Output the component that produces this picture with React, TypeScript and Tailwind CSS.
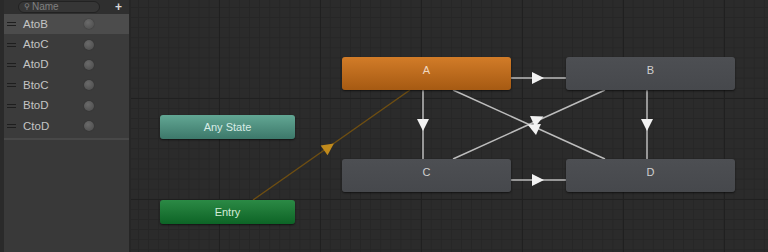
const params = ['AtoB', 'AtoC', 'AtoD', 'BtoC', 'BtoD', 'CtoD']

type Arrow = { x: number; y: number; dx: number; dy: number; color?: string }

function tri({ x, y, dx, dy, color = '#f2f2f2' }: Arrow) {
  const len = Math.hypot(dx, dy)
  const ux = dx / len
  const uy = dy / len
  const px = -uy
  const py = ux
  const s = 6
  const tip = [x + ux * s, y + uy * s]
  const b1 = [x - ux * s + px * s, y - uy * s + py * s]
  const b2 = [x - ux * s - px * s, y - uy * s - py * s]
  return <polygon points={`${tip[0]},${tip[1]} ${b1[0]},${b1[1]} ${b2[0]},${b2[1]}`} fill={color} />
}

function Sidebar() {
  return (
    <div className="flex w-[131px] shrink-0 border-r-2 border-[#262626] bg-[#393939]">
      <div className="w-[4px] bg-[#2a2a2a]" />
      <div className="flex flex-1 flex-col">
        <div className="flex h-[14px] items-center bg-[#2f2f2f] pl-[14px] pr-[7px]">
          <div className="flex h-[12px] w-[82px] items-center rounded-full border border-[#222] bg-[#363636] pl-[5px] text-[10px] leading-none text-[#808080]">
            <span className="text-[8px]">⚲</span>
            <span className="ml-[2px]">Name</span>
          </div>
          <span className="ml-auto text-[12px] font-bold leading-none text-[#d8d8d8]">+</span>
        </div>
        <div className="flex flex-col border-b-2 border-[#484848] bg-[#3b3b3b] pb-[2px]">
          {params.map((p, i) => (
            <div
              key={p}
              className={`flex h-[20.4px] items-center pl-[3px] ${i === 0 ? 'bg-[#4c4c4c]' : ''}`}
            >
              <div className="flex w-[9px] flex-col gap-[2px]">
                <div className="h-px bg-[#1e1e1e]" />
                <div className="h-px bg-[#1e1e1e]" />
              </div>
              <span className="ml-[7px] w-[61px] text-[11.5px] text-[#c4c4c4]">{p}</span>
              <div className="h-[10px] w-[10px] rounded-full bg-[radial-gradient(circle_at_40%_35%,#6a6a6a,#4a4a4a)] shadow-[0_0_1px_#222]" />
            </div>
          ))}
        </div>
      </div>
    </div>
  )
}

function Node({
  label,
  x,
  y,
  w,
  h,
  cls,
}: {
  label: string
  x: number
  y: number
  w: number
  h: number
  cls: string
}) {
  return (
    <div
      className={`absolute flex items-center justify-center rounded-[3px] text-[11px] shadow-[0_1px_2px_rgba(0,0,0,0.6)] ${cls}`}
      style={{ left: x, top: y, width: w, height: h }}
    >
      <span className={h > 30 ? '-mt-[6px]' : ''}>{label}</span>
    </div>
  )
}

export default function App() {
  const ox = 131
  const line = '#bdbdbd'
  return (
    <div className="flex h-[252px] w-[768px] overflow-hidden bg-[#2b2b2b] font-['Liberation_Sans',Arial,sans-serif]">
      <Sidebar />
      <div className="relative flex-1 bg-[#2b2b2b] bg-[image:linear-gradient(#202020_1px,transparent_1px),linear-gradient(90deg,#202020_1px,transparent_1px),linear-gradient(#262626_1px,transparent_1px),linear-gradient(90deg,#262626_1px,transparent_1px)] bg-[size:101px_101px,101px_101px,10.1px_10.1px,10.1px_10.1px] bg-[position:88px_98px,88px_98px,7px_7px,7px_7px]">
        <svg className="absolute inset-0" width={768 - ox} height={252}>
          <g transform={`translate(${-ox},0)`}>
            <line x1={253} y1={200} x2={410} y2={90} stroke="#6e4e12" strokeWidth={1.5} />
            {tri({ x: 329, y: 147, dx: 157, dy: -110, color: '#c08a1c' })}
            <line x1={511} y1={78} x2={566} y2={78} stroke={line} strokeWidth={1.5} />
            {tri({ x: 538, y: 78, dx: 1, dy: 0 })}
            <line x1={511} y1={180} x2={566} y2={180} stroke={line} strokeWidth={1.5} />
            {tri({ x: 538, y: 180, dx: 1, dy: 0 })}
            <line x1={423} y1={90} x2={423} y2={159} stroke={line} strokeWidth={1.5} />
            {tri({ x: 423, y: 125, dx: 0, dy: 1 })}
            <line x1={647} y1={90} x2={647} y2={159} stroke={line} strokeWidth={1.5} />
            {tri({ x: 647, y: 125, dx: 0, dy: 1 })}
            <line x1={453} y1={90} x2={605} y2={159} stroke={line} strokeWidth={1.5} />
            <line x1={605} y1={90} x2={453} y2={159} stroke={line} strokeWidth={1.5} />
            {tri({ x: 538, y: 119, dx: 152, dy: -69 })}
            {tri({ x: 533, y: 127, dx: -152, dy: -69 })}
          </g>
        </svg>
        <div className="absolute inset-0" style={{ transform: `translateX(${-ox}px)` }}>
          <Node
            label="A"
            x={342}
            y={57}
            w={169}
            h={33}
            cls="bg-gradient-to-b from-[#d27c28] to-[#a65a12] text-[#f0d8c0]"
          />
          <Node
            label="B"
            x={566}
            y={57}
            w={169}
            h={33}
            cls="bg-gradient-to-b from-[#4d4f53] to-[#46484c] text-[#d0d0d0]"
          />
          <Node
            label="C"
            x={342}
            y={159}
            w={169}
            h={33}
            cls="bg-gradient-to-b from-[#4d4f53] to-[#46484c] text-[#d0d0d0]"
          />
          <Node
            label="D"
            x={566}
            y={159}
            w={169}
            h={33}
            cls="bg-gradient-to-b from-[#4d4f53] to-[#46484c] text-[#d0d0d0]"
          />
          <Node
            label="Any State"
            x={160}
            y={115}
            w={135}
            h={24}
            cls="bg-gradient-to-b from-[#62a794] to-[#3d786a] text-[#d8ece6]"
          />
          <Node
            label="Entry"
            x={160}
            y={200}
            w={135}
            h={24}
            cls="bg-gradient-to-b from-[#2b8a45] to-[#0c6426] text-[#d4ecd8]"
          />
        </div>
      </div>
    </div>
  )
}
